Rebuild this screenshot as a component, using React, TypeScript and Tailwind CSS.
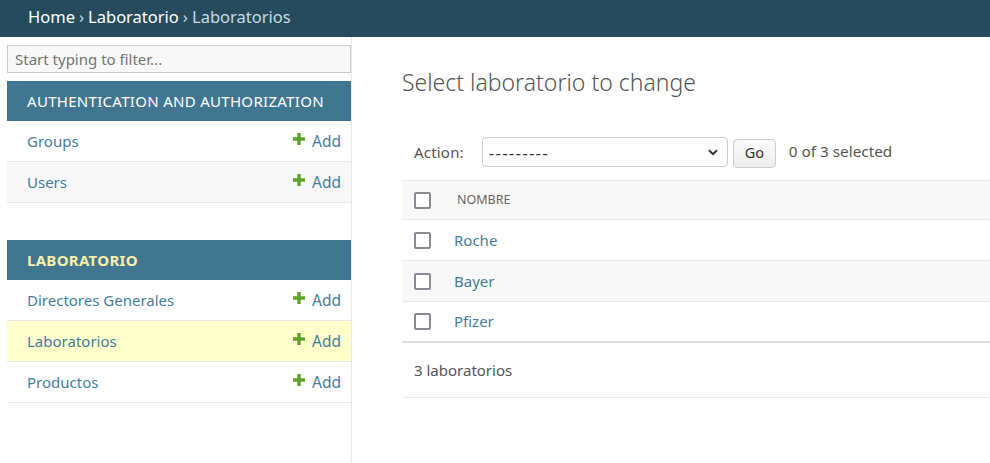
import React from "react";

const font = { fontFamily: '"Noto Sans", "Open Sans", sans-serif' };

function Plus() {
  return (
    <svg width="12" height="12" viewBox="0 0 12 12" className="inline-block mr-[7px] relative -top-[3px]">
      <path d="M4.3 0h3.4v4.3H12v3.4H7.7V12H4.3V7.7H0V4.3h4.3z" fill="#5fa225" />
    </svg>
  );
}

function Row({ name, bg }: { name: string; bg: string }) {
  return (
    <div className={`flex items-center justify-between h-[41px] border-b border-[#e8e8e8] pl-[20px] pr-[10px] ${bg}`}>
      <span className="text-[#447e9b] text-[15px]">{name}</span>
      <span className="text-[#447e9b] text-[15.5px] flex items-center pt-[2px]">
        <Plus />Add
      </span>
    </div>
  );
}

function Check() {
  return <span className="inline-block w-[17px] h-[17px] border-2 border-[#8a8a94] rounded-[2px] bg-white" />;
}

export default function App() {
  return (
    <div className="w-[990px] h-[463px] overflow-hidden bg-white" style={font}>
      <div className="h-[37px] bg-[#264b5d] flex items-center pl-[28px] pb-[3px] text-[16.5px]">
        <span className="text-white">Home</span>
        <span className="text-[#c4dce8] mx-[4px]">›</span>
        <span className="text-white">Laboratorio</span>
        <span className="text-[#c4dce8] mx-[4px]">›</span>
        <span className="text-[#c4dce8]">Laboratorios</span>
      </div>
      <div className="flex">
        <div className="w-[352px] pl-[7px] pt-[8px] border-r border-[#e8e8e8] h-[426px] shrink-0">
          <div className="h-[28px] border border-[#cccccc] bg-[#f8f8f8] flex items-center px-[7px] text-[15px] text-[#757575]">
            Start typing to filter...
          </div>
          <div className="mt-[8px]">
            <div className="h-[40px] bg-[#417690] flex items-center pl-[20px] text-[15px] text-white tracking-[0.3px]">
              AUTHENTICATION AND AUTHORIZATION
            </div>
            <Row name="Groups" bg="bg-white" />
            <Row name="Users" bg="bg-[#f8f8f8]" />
          </div>
          <div className="mt-[37px]">
            <div className="h-[40px] bg-[#417690] flex items-center pl-[20px] text-[15px] font-bold text-[#fbf0a8] tracking-[0.3px]">
              LABORATORIO
            </div>
            <Row name="Directores Generales" bg="bg-white" />
            <Row name="Laboratorios" bg="bg-[#ffffcc]" />
            <Row name="Productos" bg="bg-white" />
          </div>
        </div>
        <div className="flex-1 pl-[50px] pt-[27px]">
          <h1 className="text-[23px] font-light text-[#555] leading-[36px]">Select laboratorio to change</h1>
          <div className="mt-[37px] flex items-center h-[30px] pl-[12px] text-[15px] text-[#555]">
            <span className="tracking-[0.2px]">Action:</span>
            <div className="ml-[18px] w-[246px] h-[30px] border border-[#cccccc] rounded-[4px] flex items-center justify-between pl-[6px] pr-[8px]">
              <span className="text-[#333] text-[17px] tracking-[1.2px] leading-none">---------</span>
              <svg width="12" height="12" viewBox="0 0 12 12"><path d="M2 4.2L6 8.2l4-4" stroke="#333" strokeWidth="2" fill="none" /></svg>
            </div>
            <div className="ml-[5px] w-[43px] h-[29px] mt-[2px] border border-[#cccccc] rounded-[4px] bg-gradient-to-b from-[#fafafa] to-[#eeeeee] flex items-center justify-center text-[#333] text-[14.5px]">Go</div>
            <span className="ml-[13px] -mt-[2px] text-[#555] text-[15.3px]">0 of 3 selected</span>
          </div>
          <div className="mt-[13px]">
            <div className="h-[40px] bg-[#f8f8f8] border-y border-[#e8e8e8] flex items-center pl-[12px]">
              <Check />
              <span className="ml-[26px] text-[12.5px] text-[#666]">NOMBRE</span>
            </div>
            {[["Roche", "bg-white"], ["Bayer", "bg-[#f8f8f8]"], ["Pfizer", "bg-white"]].map(([n, bg], i) => (
              <div key={n} className={`h-[41px] flex items-center pl-[12px] ${bg} ${i === 2 ? "border-b-[2px] border-[#e0e0e0]" : "border-b border-[#e8e8e8]"}`}>
                <Check />
                <span className="ml-[23px] text-[15px] text-[#447e9b]">{n}</span>
              </div>
            ))}
            <div className="h-[55px] flex items-center pl-[12px] text-[15px] text-[#555] border-b border-[#e8e8e8]">
              3 laboratorios
            </div>
          </div>
        </div>
      </div>
    </div>
  );
}
